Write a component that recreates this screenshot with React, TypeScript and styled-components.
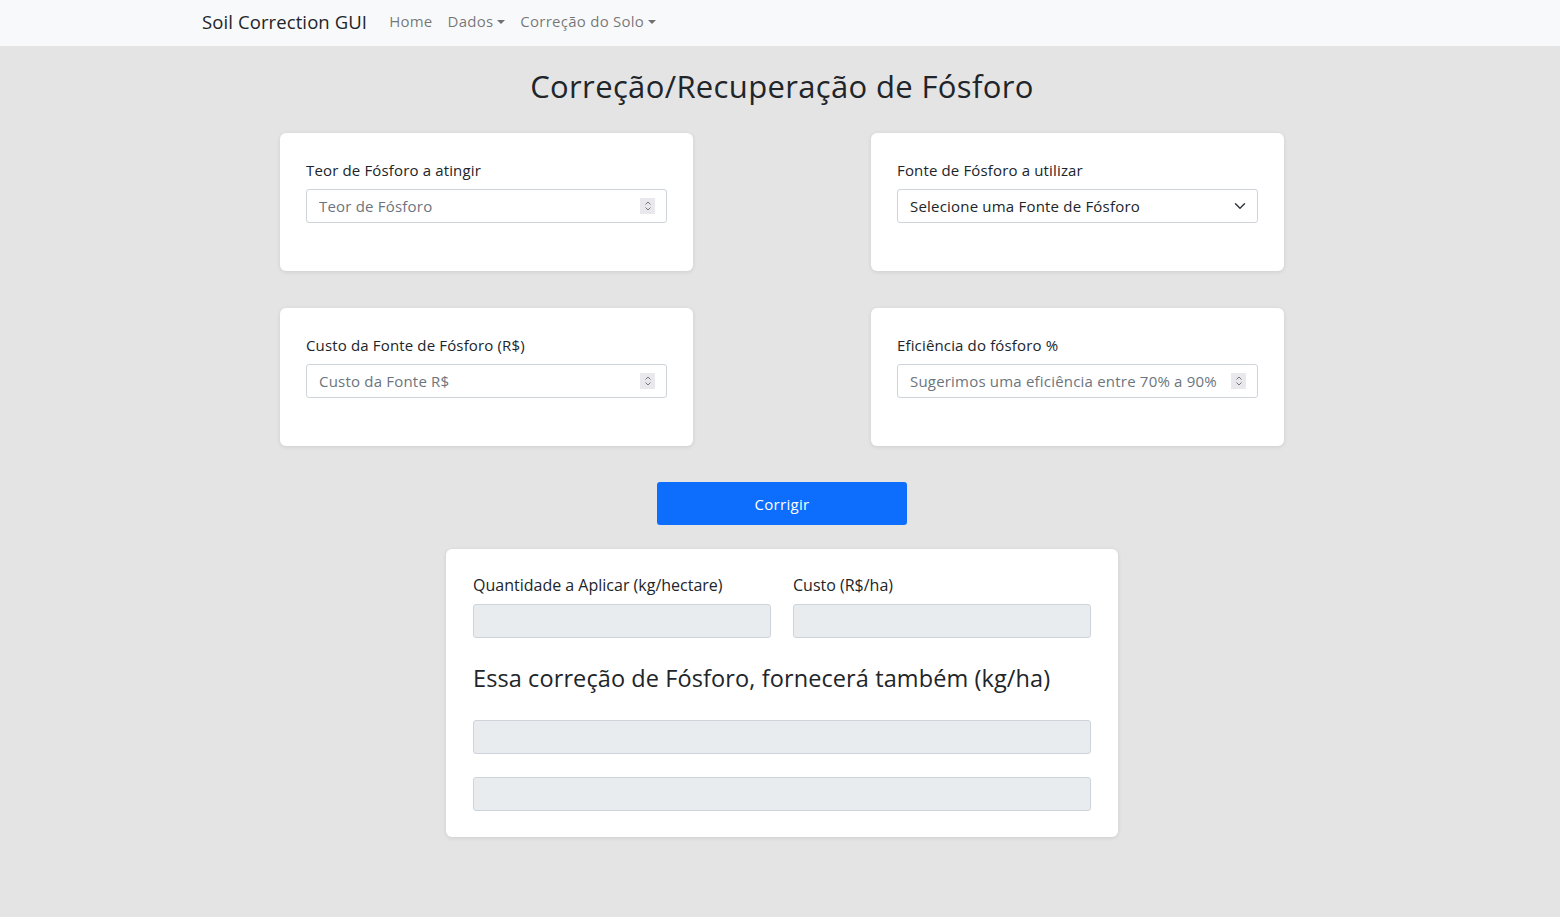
import React from "react";
import styled, { createGlobalStyle } from "styled-components";

const GlobalStyle = createGlobalStyle`
  html, body { margin: 0; padding: 0; }
  body {
    background: #e4e4e4;
    font-family: "Open Sans", "Noto Sans", sans-serif;
    color: #212529;
    min-height: 917px;
  }
  * { box-sizing: border-box; }
`;

const Navbar = styled.nav`
  height: 46px;
  background: #f8f9fa;
  display: flex;
  align-items: center;
  padding: 0 0 4px 202px;
`;

const Brand = styled.a`
  font-size: 18.5px;
  color: #212529;
  margin-right: 22px;
  text-decoration: none;
  letter-spacing: 0.1px;
`;

const NavLink = styled.a<{ $caret?: boolean }>`
  font-size: 15px;
  letter-spacing: 0.25px;
  color: rgba(0, 0, 0, 0.55);
  margin-right: 15px;
  text-decoration: none;
  display: inline-flex;
  align-items: center;
  &::after {
    content: "";
    display: ${(p) => (p.$caret ? "inline-block" : "none")};
    margin-left: 4px;
    border-top: 4px solid currentColor;
    border-left: 4px solid transparent;
    border-right: 4px solid transparent;
    transform: translateY(1px);
  }
`;

const Main = styled.main`
  padding: 20px 0 60px 4px;
`;

const Title = styled.h2`
  margin: 0 0 27px;
  text-align: center;
  font-size: 31px;
  letter-spacing: 0.35px;
  font-weight: 500;
  line-height: 40px;
  color: #212529;
`;

const Grid = styled.div`
  display: grid;
  grid-template-columns: 413px 413px;
  column-gap: 178px;
  row-gap: 37px;
  justify-content: center;
`;

const Card = styled.div`
  background: #fff;
  border-radius: 6px;
  box-shadow: 0 1px 4px rgba(0, 0, 0, 0.1);
  padding: 26px 26px 48px;
  height: 138px;
`;

const Label = styled.label<{ $large?: boolean }>`
  display: block;
  font-size: ${(p) => (p.$large ? "16px" : "15px")};
  letter-spacing: ${(p) => (p.$large ? "0" : "0.15px")};
  line-height: ${(p) => (p.$large ? "24px" : "22px")};
  color: #212529;
  margin-bottom: ${(p) => (p.$large ? "7px" : "8px")};
`;

const Field = styled.div`
  display: flex;
  align-items: center;
  height: 34px;
  border: 1px solid #ced4da;
  border-radius: 3px;
  background: #fff;
  padding: 0 11px 0 12px;
`;

const Input = styled.input`
  flex: 1;
  min-width: 0;
  border: none;
  outline: none;
  background: transparent;
  font-family: inherit;
  font-size: 15px;
  letter-spacing: 0.2px;
  color: #212529;
  padding: 0;
  &::placeholder { color: #6c757d; }
`;

const Spinner = styled.span`
  width: 15px;
  height: 16px;
  background: #e9e9ed;
  display: flex;
  align-items: center;
  justify-content: center;
`;

const SelectText = styled.span`
  flex: 1;
  font-size: 15px;
  letter-spacing: 0.2px;
  color: #212529;
`;

const Button = styled.button`
  display: block;
  margin: 36px auto 24px;
  width: 250px;
  height: 43px;
  border: none;
  border-radius: 3px;
  background: #0d6efd;
  color: #fff;
  font-family: inherit;
  font-size: 15px;
  letter-spacing: 0.3px;
`;

const ResultCard = styled.div`
  width: 672px;
  margin: 0 auto;
  background: #fff;
  border-radius: 6px;
  box-shadow: 0 1px 4px rgba(0, 0, 0, 0.1);
  padding: 24px 27px 26px;
`;

const Row = styled.div`
  display: grid;
  grid-template-columns: 1fr 1fr;
  column-gap: 22px;
`;

const ReadOnly = styled.div<{ $gap?: number }>`
  height: 34px;
  background: #e9ecef;
  border: 1px solid #ced4da;
  border-radius: 3px;
  margin-top: ${(p) => p.$gap ?? 0}px;
`;

const SubTitle = styled.h4`
  margin: 24px 0 26px;
  font-size: 23.5px;
  letter-spacing: 0.1px;
  font-weight: 500;
  line-height: 32px;
  color: #212529;
`;

const SpinIcon = () => (
  <svg width="8" height="12" viewBox="0 0 8 12" fill="none" stroke="#777" strokeWidth="1">
    <path d="M1.5 4.5 L4 2 L6.5 4.5" />
    <path d="M1.5 7.5 L4 10 L6.5 7.5" />
  </svg>
);

const Chevron = () => (
  <svg width="12" height="12" viewBox="0 0 16 16" fill="none" stroke="#343a40" strokeWidth="2" strokeLinecap="round" strokeLinejoin="round">
    <path d="M2 5l6 6 6-6" />
  </svg>
);

const NumberField = ({ placeholder }: { placeholder: string }) => (
  <Field>
    <Input placeholder={placeholder} />
    <Spinner>
      <SpinIcon />
    </Spinner>
  </Field>
);

export default function App() {
  return (
    <>
      <GlobalStyle />
      <Navbar>
        <Brand>Soil Correction GUI</Brand>
        <NavLink>Home</NavLink>
        <NavLink $caret>Dados</NavLink>
        <NavLink $caret>Correção do Solo</NavLink>
      </Navbar>
      <Main>
        <Title>Correção/Recuperação de Fósforo</Title>
        <Grid>
          <Card>
            <Label>Teor de Fósforo a atingir</Label>
            <NumberField placeholder="Teor de Fósforo" />
          </Card>
          <Card>
            <Label>Fonte de Fósforo a utilizar</Label>
            <Field>
              <SelectText>Selecione uma Fonte de Fósforo</SelectText>
              <Chevron />
            </Field>
          </Card>
          <Card>
            <Label>Custo da Fonte de Fósforo (R$)</Label>
            <NumberField placeholder="Custo da Fonte R$" />
          </Card>
          <Card>
            <Label>Eficiência do fósforo %</Label>
            <NumberField placeholder="Sugerimos uma eficiência entre 70% a 90%" />
          </Card>
        </Grid>
        <Button>Corrigir</Button>
        <ResultCard>
          <Row>
            <div>
              <Label $large>Quantidade a Aplicar (kg/hectare)</Label>
              <ReadOnly />
            </div>
            <div>
              <Label $large>Custo (R$/ha)</Label>
              <ReadOnly />
            </div>
          </Row>
          <SubTitle>Essa correção de Fósforo, fornecerá também (kg/ha)</SubTitle>
          <ReadOnly />
          <ReadOnly $gap={23} />
        </ResultCard>
      </Main>
    </>
  );
}
